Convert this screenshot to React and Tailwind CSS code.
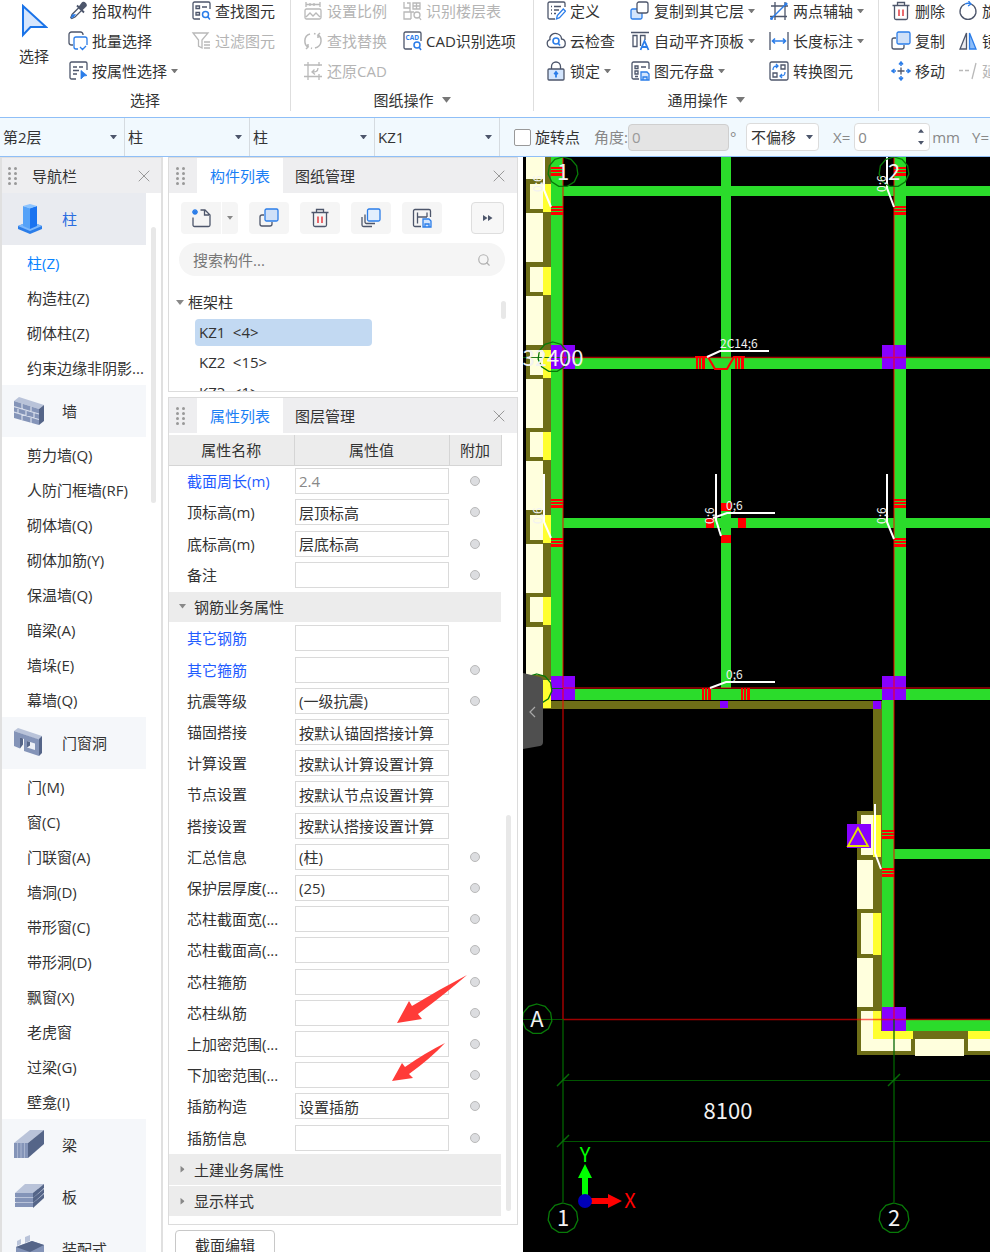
import { Fragment } from "react";
import clsx from "clsx";
import { Search, X } from "lucide-react";

const DARK = "#4d566b";
const BLUE = "#2b7de9";
const GREY = "#b9b9b9";

function Caret({ className, up }) {
  return (
    <svg viewBox="0 0 8 5" className={clsx("shrink-0", className)} aria-hidden="true">
      <path d={up ? "M0 5 4 0l4 5Z" : "M0 0h8L4 5Z"} fill="currentColor" />
    </svg>
  );
}

const icons = {
  picker: (
    <>
      <path d="M4 13.5 11 6.500l2.800 2.800L7 16l-3.200 1.500-1-1Z" fill="#fff" stroke={DARK} strokeWidth="1.300" />
      <path d="M2.500 17.500 4 13.500l4-.5-2 3Z" fill={BLUE} />
      <path d="m9 4.500 7 7M11.500 6l3-4c1-1.300 4.500 1.500 3.200 3L14 8.500Z" fill={DARK} stroke={DARK} strokeWidth="1.800" />
    </>
  ),
  batch: (
    <>
      <path d="M5 14H3.500A2.500 2.500 0 0 1 1 11.500v-8A2.500 2.500 0 0 1 3.500 1h9A2.500 2.500 0 0 1 15 3.500V4" stroke={DARK} />
      <path d="M10 18H8a2 2 0 0 1-2-2V8a2 2 0 0 1 2-2h9a2 2 0 0 1 2 2v6M12 16l2.500 2.500L18 15" stroke={BLUE} />
    </>
  ),
  byProp: (
    <>
      <path d="M8 18H3.500A1.500 1.500 0 0 1 2 16.500v-14A1.500 1.500 0 0 1 3.500 1h14A1.500 1.500 0 0 1 19 2.500V9M5 6h4M11 6h4M5 9.500h6M5 13h4" stroke={DARK} />
      <path d="m13 9.500 6 5-3 .5-3 3Z" fill={BLUE} stroke={BLUE} strokeWidth=".8" />
    </>
  ),
  findEl: (
    <>
      <path d="M9 18H3.500A1.500 1.500 0 0 1 2 16.500v-14A1.500 1.500 0 0 1 3.500 1h14A1.500 1.500 0 0 1 19 2.500V8M5 5h3.500v2.500H5ZM11 6h5M5 11.500h3.500V14H5Z" stroke={DARK} />
      <circle cx="14.500" cy="13.500" r="3" stroke={BLUE} strokeWidth="1.500" />
      <path d="m16.500 15.500 2.500 3" stroke={BLUE} strokeWidth="1.500" />
    </>
  ),
  filter: <path d="M2 2h15l-6 7v8l-3.500-2V9ZM13 11h6M13 14h6M13 17h6" stroke={GREY} />,
  scale: <path d="M3 1v5M17 1v5M3 3.500h14M7 2v3M11 2v3M2 9.500A1.500 1.500 0 0 1 3.500 8h13A1.500 1.500 0 0 1 18 9.500v7a1.500 1.500 0 0 1-1.500 1.500h-13A1.500 1.500 0 0 1 2 16.500ZM3 16l4-4 3 3 3-3 4 4" stroke={GREY} />,
  replace: <path d="M7 3C0 5 1 14 5 16l-2 2M5 16V13M12 17c8-2 7-11 3-13l2-2M15 4v3M8 17l1 .5M11 2.500 12.500 3" stroke={GREY} strokeWidth="1.500" />,
  restore: <path d="M5 1v18M1 4h18M1 15.500h18M16 1v4M16 13v6M15 7c0 4-3 4-6 4m2.500-2.500L9 11l3 2.500" stroke={GREY} />,
  floors: (
    <g stroke={GREY}>
      <path d="M2 1v6h6V2H5M8 7v4H2v7h7M8 11h4M11 2h7v6h-7ZM14.500 2v6M11 5h7M9 11v7" />
      <circle cx="15" cy="14" r="3" />
      <path d="m17 16 2 3" />
    </g>
  ),
  cad: (
    <>
      <path d="M10 18H3.500A1.500 1.500 0 0 1 2 16.500v-14A1.500 1.500 0 0 1 3.500 1h14A1.500 1.500 0 0 1 19 2.500V10" stroke={DARK} />
      <text x="3.500" y="9" fontSize="6.500" fontWeight="700" fill={BLUE} fontFamily="Open Sans">CAD</text>
      <circle cx="15" cy="14" r="3" stroke={BLUE} strokeWidth="1.500" />
      <path d="m17 16 2 3" stroke={BLUE} strokeWidth="1.500" />
    </>
  ),
  define: (
    <>
      <path d="M9 18H3.500A1.500 1.500 0 0 1 2 16.500v-14A1.500 1.500 0 0 1 3.500 1h14A1.500 1.500 0 0 1 19 2.500V6M5 5.500h1M8 5.500h7M5 9h1M8 9h5M5 12.500h1M8 12.500h2" stroke={DARK} />
      <path d="m10.500 18 .8-3.500 6-6.500 2.200 2.200-6 6.500Z" stroke={BLUE} />
    </>
  ),
  cloud: (
    <>
      <path d="M5 16.500a4 4 0 0 1-1-7.800C3 4 8 1 12 3c2 .8 3.500 3 3.500 5 5 .5 5 8.500 0 8.500Z" stroke={DARK} />
      <circle cx="10" cy="10" r="3" stroke={BLUE} strokeWidth="1.600" />
      <path d="m12 12 2 2.500" stroke={BLUE} strokeWidth="1.600" />
    </>
  ),
  lock: (
    <>
      <path d="M5.500 8V5.500a4.500 4.500 0 0 1 9 0V8" stroke={DARK} />
      <rect x="2" y="8" width="16" height="11" rx="1" fill="#d3e5fd" stroke={DARK} />
      <path d="M10 16.500V11.500M8.200 13.200 10 11l1.800 2.200" stroke={BLUE} strokeWidth="1.800" />
    </>
  ),
  copyFloor: (
    <>
      <rect x="1" y="8" width="11" height="10" rx="1.500" fill="#d3e5fd" stroke={BLUE} />
      <rect x="7" y="1" width="11" height="11" rx="2" fill="#fff" stroke={DARK} />
    </>
  ),
  align: (
    <>
      <path d="M1 1.500h18M3 4.500h4v11H3ZM10.500 15V4.500H15V9" stroke={DARK} />
      <path d="m10.500 19 4-9 4 9M12 16h5" stroke={BLUE} strokeWidth="1.800" />
    </>
  ),
  save: (
    <>
      <path d="M9 18H3.500A1.500 1.500 0 0 1 2 16.500v-14A1.500 1.500 0 0 1 3.500 1h14A1.500 1.500 0 0 1 19 2.500V8M5 5h3v2.500H5ZM11 6h5M5 10h3v3H5ZM5 15.500h3" stroke={DARK} />
      <path d="M11 11h6l2 2v6h-8ZM13 19v-3h4v3" stroke={BLUE} fill="#d3e5fd" />
    </>
  ),
  axis: (
    <>
      <path d="M6 1v18M16 1v18M2 5h17M1 15.500h17" stroke={DARK} />
      <path d="M2 18 18 2" stroke={BLUE} strokeWidth="1.500" />
      <circle cx="17" cy="3" r="1.500" fill={BLUE} />
      <circle cx="2.500" cy="17.500" r="1.500" fill={BLUE} />
    </>
  ),
  length: (
    <>
      <path d="M1 1v18M19 1v18" stroke={DARK} />
      <path d="M4 10h12M6 7.500 3.500 10 6 12.500M14 7.500l2.500 2.500-2.500 2.500" stroke={BLUE} strokeWidth="1.600" />
    </>
  ),
  convert: (
    <>
      <rect x="1" y="1" width="18" height="18" rx="1.500" stroke={DARK} />
      <path d="M12 4h4v4h-4ZM4 12h4v4H4Z" stroke={DARK} />
      <path d="M4 9c0-3 1-4 4.500-4M7 3l2 2-2 2M16 11c0 3-1 4-4.500 4M13 13l-2 2 2 2" stroke={BLUE} />
    </>
  ),
  trash: (
    <>
      <path d="M1.500 4.500h17M6.500 4V1.500h7V4M3.500 5v12A1.500 1.500 0 0 0 5 18.500h10a1.500 1.500 0 0 0 1.500-1.500V5" stroke={DARK} />
      <path d="M8 8.500v6.500M12 8.500v6.500" stroke="#e5484d" strokeWidth="1.600" />
    </>
  ),
  copy: (
    <>
      <path d="M5 7H3a2 2 0 0 0-2 2v7a2 2 0 0 0 2 2h8a2 2 0 0 0 2-2v-2" stroke={DARK} />
      <rect x="6" y="1" width="13" height="12" rx="1.500" fill="#cfe0f8" stroke={BLUE} />
    </>
  ),
  copies: (
    <>
      <path d="M4 6.500V14a1.500 1.500 0 0 0 1.500 1.500H14M1 9v8a1.500 1.500 0 0 0 1.500 1.500H11" stroke={DARK} />
      <rect x="6.500" y="1" width="12.500" height="12" rx="1.500" fill="#e3effd" stroke={BLUE} />
    </>
  ),
  move: (
    <>
      <path d="M10 6.500v7M6.500 10h7" stroke={DARK} />
      <path d="M10 5V2M10 15v3M5 10H2M15 10h3M8 3.500 10 1l2 2.500M8 16.500l2 2.500 2-2.500M3.500 8 1 10l2.500 2M16.500 8l2.500 2-2.500 2" stroke={BLUE} strokeWidth="1.500" />
    </>
  ),
  rotate: (
    <>
      <path d="M13 3a8 8 0 1 1-6 0" stroke={DARK} />
      <path d="M7 3c2-1 4-1 6 0M10.500 0 13 3l-3 2" stroke={BLUE} />
    </>
  ),
  mirror: (
    <>
      <path d="M8.500 2v16H2Z" fill="#ececf0" stroke={DARK} />
      <path d="M11.500 2v16H18Z" fill="#8dbdf8" stroke={BLUE} />
    </>
  ),
  extend: <path d="M1 9.500h4M7 9.500h4M18 2l-4 16" stroke={GREY} />,
  newFile: (
    <>
      <path d="M9.500 2H14l5 5v10a1.500 1.500 0 0 1-1.500 1.500h-14A1.500 1.500 0 0 1 2 17V9.500M13.500 2.500V7H18" stroke={DARK} />
      <path d="M4 1v6M1 4h6M2 2l4 4M6 2 2 6" stroke={BLUE} />
    </>
  ),
  saveLayout: (
    <>
      <path d="M9 18.500H3A1.500 1.500 0 0 1 1.500 17V3A1.500 1.500 0 0 1 3 1.500h14A1.500 1.500 0 0 1 18.500 3v6M5.500 4.500v11M5.500 9H15M15 4.500V9" stroke={DARK} />
      <path d="M11 11h6l2 2v6h-8ZM13 19v-3h4v3" stroke={BLUE} fill="#d3e5fd" />
    </>
  ),
};

function Icon({ name }) {
  return (
    <svg viewBox="0 0 20 20" className="size-5 shrink-0" fill="none" strokeWidth="1.300" aria-hidden="true">
      {icons[name]}
    </svg>
  );
}

function RibbonItem({ icon, label, caret, disabled }) {
  return (
    <button
      disabled={disabled}
      className={clsx("flex h-[22px] items-center gap-1 whitespace-nowrap", disabled ? "text-[#b4b4b4]" : "text-[#333]")}
    >
      <Icon name={icon} />
      {label}
      {caret && <Caret className="w-[7px] text-[#777]" />}
    </button>
  );
}

function RibbonColumn({ className, items }) {
  return (
    <div className={clsx("flex shrink-0 flex-col gap-2", className)}>
      {items.map((item) => (
        <RibbonItem key={item.label} {...item} />
      ))}
    </div>
  );
}

function RibbonGroup({ className, bodyClassName, label, caret, children }) {
  return (
    <section className={clsx("flex h-[111px] shrink-0 flex-col justify-between border-r border-[#dedede]", className)}>
      <div className={clsx("flex", bodyClassName)}>{children}</div>
      <div className="flex h-[22px] items-center justify-center gap-2">
        {label}
        {caret && <Caret className="w-[9px] text-[#777]" />}
      </div>
    </section>
  );
}

function Ribbon() {
  return (
    <header className="flex h-[117px] shrink-0 overflow-hidden">
      <RibbonGroup className="w-[291px]" label="选择">
        <button className="flex w-[68px] flex-col items-center gap-2 pt-1">
          <svg viewBox="0 0 28 34" className="h-[34px] w-7" aria-hidden="true">
            <path d="M3 2v29l7.500-8H26Z" fill="#d6e6fd" stroke="#1a73e8" strokeWidth="2" />
          </svg>
          选择
        </button>
        <RibbonColumn
          className="w-[123px]"
          items={[
            { icon: "picker", label: "拾取构件" },
            { icon: "batch", label: "批量选择" },
            { icon: "byProp", label: "按属性选择", caret: true },
          ]}
        />
        <RibbonColumn
          items={[
            { icon: "findEl", label: "查找图元" },
            { icon: "filter", label: "过滤图元", disabled: true },
          ]}
        />
      </RibbonGroup>
      <RibbonGroup className="w-[243px]" bodyClassName="pl-3" label="图纸操作" caret>
        <RibbonColumn
          className="w-[99px]"
          items={[
            { icon: "scale", label: "设置比例", disabled: true },
            { icon: "replace", label: "查找替换", disabled: true },
            { icon: "restore", label: "还原CAD", disabled: true },
          ]}
        />
        <RibbonColumn
          items={[
            { icon: "floors", label: "识别楼层表", disabled: true },
            { icon: "cad", label: "CAD识别选项" },
          ]}
        />
      </RibbonGroup>
      <RibbonGroup className="w-[345px]" bodyClassName="pl-3" label="通用操作" caret>
        <RibbonColumn
          className="w-[84px]"
          items={[
            { icon: "define", label: "定义" },
            { icon: "cloud", label: "云检查" },
            { icon: "lock", label: "锁定", caret: true },
          ]}
        />
        <RibbonColumn
          className="w-[139px]"
          items={[
            { icon: "copyFloor", label: "复制到其它层", caret: true },
            { icon: "align", label: "自动平齐顶板", caret: true },
            { icon: "save", label: "图元存盘", caret: true },
          ]}
        />
        <RibbonColumn
          items={[
            { icon: "axis", label: "两点辅轴", caret: true },
            { icon: "length", label: "长度标注", caret: true },
            { icon: "convert", label: "转换图元" },
          ]}
        />
      </RibbonGroup>
      <div className="flex pl-3">
        <RibbonColumn
          className="w-[67px]"
          items={[
            { icon: "trash", label: "删除" },
            { icon: "copy", label: "复制" },
            { icon: "move", label: "移动" },
          ]}
        />
        <RibbonColumn
          items={[
            { icon: "rotate", label: "旋转" },
            { icon: "mirror", label: "镜像" },
            { icon: "extend", label: "延伸", disabled: true },
          ]}
        />
      </div>
    </header>
  );
}

function ContextSelect({ label, value }) {
  return (
    <div className="relative h-full w-[125px] shrink-0 border-r border-[#d5dbe0]">
      <select aria-label={label} className="h-full w-full appearance-none bg-transparent pl-[3px] text-[#333]">
        <option>{value}</option>
      </select>
      <Caret className="pointer-events-none absolute top-[17px] right-[7px] w-[7px] text-[#4d566b]" />
    </div>
  );
}

function ContextBar() {
  return (
    <div className="flex h-10 shrink-0 items-center overflow-hidden border-y border-[#8fbff7] bg-[#f1f9fe] whitespace-nowrap text-[#888]">
      <ContextSelect label="楼层" value="第2层" />
      <ContextSelect label="构件大类" value="柱" />
      <ContextSelect label="构件类型" value="柱" />
      <ContextSelect label="构件" value="KZ1" />
      <label className="ml-3.5 flex shrink-0 items-center gap-1 text-[#333]">
        <input type="checkbox" className="size-[17px] appearance-none rounded-[2px] border border-[#999] bg-white" />
        旋转点
      </label>
      <label htmlFor="angle" className="ml-3.5 shrink-0">角度:</label>
      <input
        id="angle"
        disabled
        defaultValue="0"
        className="h-[27px] w-[101px] shrink-0 rounded border border-[#cfcfcf] bg-[#e4e4e4] pl-[3px] text-[#999]"
      />
      <span className="ml-px w-4 shrink-0">°</span>
      <div className="relative shrink-0">
        <select aria-label="偏移方式" className="h-7 w-[73px] appearance-none rounded border border-[#dcdcdc] bg-white pl-1 text-[#333]">
          <option>不偏移</option>
        </select>
        <Caret className="pointer-events-none absolute top-3 right-1.5 w-[7px] text-[#4d566b]" />
      </div>
      <label htmlFor="offset-x" className="ml-3.5 shrink-0">X=</label>
      <div className="relative ml-1 shrink-0">
        <input id="offset-x" defaultValue="0" className="h-7 w-[76px] rounded border border-[#dcdcdc] bg-white pl-[3px]" />
        <Caret up className="pointer-events-none absolute top-1.5 right-1.5 w-[6px] text-[#4d566b]" />
        <Caret className="pointer-events-none absolute right-1.5 bottom-1.5 w-[6px] text-[#4d566b]" />
      </div>
      <span className="ml-0.5 shrink-0">mm</span>
      <label htmlFor="offset-y" className="ml-3 shrink-0">Y=</label>
      <input id="offset-y" defaultValue="0" className="ml-1 h-7 w-[76px] shrink-0 rounded border border-[#dcdcdc] bg-white pl-[3px]" />
    </div>
  );
}

function Grip() {
  return (
    <span className="grid w-[9px] shrink-0 grid-cols-2 gap-x-[3px] gap-y-0.5">
      {Array.from({ length: 8 }, (_, i) => (
        <i key={i} className="size-[3px] rounded-full bg-[#999]" />
      ))}
    </span>
  );
}

function CloseButton() {
  return (
    <button aria-label="关闭" className="ml-auto text-[#999]">
      <X size={20} strokeWidth={1.2} />
    </button>
  );
}

const shapes = {
  column: (
    <>
      <path d="m4 23 12-5 12 5v3l-12 5-12-5Z" fill="#2b7de9" />
      <path d="m4 23 12-5 12 5-12 5Z" fill="#7db8fb" />
      <path d="M9 3v20l7 3V5Z" fill="#55a2f8" />
      <path d="M23 3v20l-7 3V5Z" fill="#1a73f0" />
      <path d="m9 3 7-2 7 2-7 2.500Z" fill="#8cc4ff" />
    </>
  ),
  wall: (
    <>
      <path d="m0 6 5-4 25 8-5 4Z" fill="#b9c3d9" />
      <path d="m25 14 5-4v16l-5 4Z" fill="#556588" />
      <path d="m0 6 25 8v16L0 23Z" fill="#8494b8" />
      <path d="m0 11.500 25 7.500M0 17l25 7.500M8 8.500V14M17 11.500V17M4 12.500V18M12 15v6M20 17.500V23M8 19.500V25M17 22v6" stroke="#d6dcea" strokeWidth="1.200" />
    </>
  ),
  door: (
    <>
      <path d="m0 4 4-3 24 8-3 4Z" fill="#b9c3d9" />
      <path d="m25 12 3-3v17l-3 3Z" fill="#556588" />
      <path d="m0 4 25 8.500V29l-15-5V12l-4-1.500v11L0 19Z" fill="#8494b8" />
      <path d="m13 14 8 2.500V23l-8-2.500Z" fill="#eef1f7" />
      <path d="M13 14v6.500l3-2V15ZM6 10.500l3 1v6l-3 4Z" fill="#556588" />
    </>
  ),
  beam: (
    <>
      <path d="M0 14 16 1h14L14 14Z" fill="#b9c3d9" />
      <path d="M14 14 30 1v14L14 29Z" fill="#556588" />
      <path d="M0 14h14v15H0Z" fill="#8494b8" />
      <path d="M3.500 14v15M7 14v15M10.500 14v15" stroke="#a9b5d0" />
    </>
  ),
  slab: (
    <>
      {[10, 5, 0].map((y) => (
        <g key={y} transform={`translate(0 ${y})`}>
          <path d="M1 12 11 3h19L19 12Z" fill="#b9c3d9" />
          <path d="M19 12 30 3v4L19 17Z" fill="#556588" />
          <path d="M1 12h18v4H1Z" fill="#8494b8" />
        </g>
      ))}
    </>
  ),
  precast: (
    <>
      <path d="m2 14 16-6 12 4v12l-14 6L2 24Z" fill="#8494b8" />
      <path d="m2 14 16-6 12 4-14 7Z" fill="#556588" />
      <path d="m3 8 4-2v5l-4 2ZM11 4l5-2v6l-5 2Z" fill="#b9c3d9" />
    </>
  ),
};

const navGroups = [
  { name: "柱", shape: "column", active: true, items: ["柱(Z)", "构造柱(Z)", "砌体柱(Z)", "约束边缘非阴影..."] },
  {
    name: "墙",
    shape: "wall",
    items: ["剪力墙(Q)", "人防门框墙(RF)", "砌体墙(Q)", "砌体加筋(Y)", "保温墙(Q)", "暗梁(A)", "墙垛(E)", "幕墙(Q)"],
  },
  {
    name: "门窗洞",
    shape: "door",
    items: ["门(M)", "窗(C)", "门联窗(A)", "墙洞(D)", "带形窗(C)", "带形洞(D)", "飘窗(X)", "老虎窗", "过梁(G)", "壁龛(I)"],
  },
  { name: "梁", shape: "beam", items: [] },
  { name: "板", shape: "slab", items: [] },
  { name: "装配式", shape: "precast", items: [] },
];

function Navigator() {
  return (
    <nav className="flex w-[163px] shrink-0 flex-col overflow-hidden border-x-2 border-t border-[#e0e0e0]">
      <div className="flex h-[35px] shrink-0 items-center bg-[#eeeef0] pr-[7px] pl-1.5">
        <Grip />
        <span className="ml-[15px]">导航栏</span>
        <CloseButton />
      </div>
      <div className="flex min-h-0 flex-1 gap-[5px]">
        <div className="w-36 shrink-0">
          {navGroups.map((group) => (
            <Fragment key={group.name}>
              <button
                className={clsx(
                  "flex h-[52px] w-full items-center gap-[18px] pl-3 text-left",
                  group.active ? "bg-[#e9ebf0] text-[#2b6de0]" : "bg-[#f5f7fa]"
                )}
              >
                <svg viewBox="0 0 30 32" className="h-8 w-[30px] shrink-0" fill="none" aria-hidden="true">
                  {shapes[group.shape]}
                </svg>
                {group.name}
              </button>
              {group.items.map((item) => (
                <button
                  key={item}
                  className={clsx(
                    "block h-[35px] w-full pl-[25px] text-left whitespace-nowrap",
                    item === "柱(Z)" && "text-[#0a84ff]"
                  )}
                >
                  {item}
                </button>
              ))}
            </Fragment>
          ))}
        </div>
        <div className="mt-[34px] h-[276px] w-[5px] rounded-full bg-[#e8e8e8]" />
      </div>
    </nav>
  );
}

function PanelTabs({ active, other }) {
  return (
    <div className="flex h-[35px] shrink-0 items-center bg-[#eeeef0] pr-2 pl-[7px]">
      <Grip />
      <button className="ml-3 h-full bg-white px-[13px] text-[#1a80f5]">{active}</button>
      <button className="h-full px-3">{other}</button>
      <CloseButton />
    </div>
  );
}

const toolButton = "flex h-8 w-10 items-center justify-center rounded bg-[#f5f5f5]";

function ComponentList() {
  return (
    <section className="flex h-[235px] shrink-0 flex-col overflow-hidden border border-[#dcdcdc]">
      <PanelTabs active="构件列表" other="图纸管理" />
      <div className="mt-[9px] flex shrink-0 gap-[11px] pr-[13px] pl-3">
        <div className="flex gap-px">
          <button aria-label="新建" className="flex h-8 w-10 items-center justify-center rounded-l bg-[#f5f5f5]">
            <Icon name="newFile" />
          </button>
          <button aria-label="新建选项" className="flex h-8 w-4 items-center justify-center rounded-r bg-[#f5f5f5]">
            <Caret className="w-[6px] text-[#888]" />
          </button>
        </div>
        <button aria-label="复制" className={toolButton}><Icon name="copy" /></button>
        <button aria-label="删除" className={toolButton}><Icon name="trash" /></button>
        <button aria-label="层间复制" className={toolButton}><Icon name="copies" /></button>
        <button aria-label="存档" className={toolButton}><Icon name="saveLayout" /></button>
        <button aria-label="更多" className="ml-auto flex h-8 w-[33px] items-center justify-center rounded border border-[#dedede] bg-[#f7f7f7]">
          <svg viewBox="0 0 10 6" className="w-2.5" aria-hidden="true">
            <path d="M0 0v6l4.500-3ZM5 0v6l4.500-3Z" fill={DARK} />
          </svg>
        </button>
      </div>
      <label className="mt-[9px] mr-3 ml-2.5 flex h-[33px] shrink-0 items-center rounded-full bg-[#f5f5f5] px-3.5">
        <input aria-label="搜索构件" placeholder="搜索构件..." className="min-w-0 flex-1 bg-transparent placeholder:text-[#777]" />
        <Search size={14} strokeWidth={2} className="text-[#b0b0b0]" />
      </label>
      <div className="mt-[11px] flex min-h-0 pr-[11px] pl-[7px]">
        <div className="flex-1">
          <button className="flex h-[30px] items-center gap-1">
            <Caret className="w-[8px] text-[#888]" />
            框架柱
          </button>
          {["KZ1\u2002<4>", "KZ2\u2002<15>", "KZ3\u2002<1>"].map((name, i) => (
            <div key={name} className="flex h-[30px] items-center pl-[19px]">
              <button
                className={clsx("h-[27px] w-[177px] rounded pl-1 text-left", i === 0 && "bg-[#c2d9f2]")}
              >
                {name}
              </button>
            </div>
          ))}
        </div>
        <div className="mt-3.5 h-[18px] w-[5px] rounded-full bg-[#e8e8e8]" />
      </div>
    </section>
  );
}

// link: label shown in blue, extra: row has the "附加" toggle
const properties = [
  { name: "截面周长(m)", value: "2.4", link: true, extra: true, readOnly: true },
  { name: "顶标高(m)", value: "层顶标高", extra: true },
  { name: "底标高(m)", value: "层底标高", extra: true },
  { name: "备注", value: "", extra: true },
  { section: "钢筋业务属性", open: true },
  { name: "其它钢筋", value: "", link: true },
  { name: "其它箍筋", value: "", link: true, extra: true },
  { name: "抗震等级", value: "(一级抗震)", extra: true },
  { name: "锚固搭接", value: "按默认锚固搭接计算" },
  { name: "计算设置", value: "按默认计算设置计算" },
  { name: "节点设置", value: "按默认节点设置计算" },
  { name: "搭接设置", value: "按默认搭接设置计算" },
  { name: "汇总信息", value: "(柱)", extra: true },
  { name: "保护层厚度(...", value: "(25)", extra: true },
  { name: "芯柱截面宽(...", value: "", extra: true },
  { name: "芯柱截面高(...", value: "", extra: true },
  { name: "芯柱箍筋", value: "", extra: true },
  { name: "芯柱纵筋", value: "", extra: true },
  { name: "上加密范围(...", value: "", extra: true },
  { name: "下加密范围(...", value: "", extra: true },
  { name: "插筋构造", value: "设置插筋", extra: true },
  { name: "插筋信息", value: "", extra: true },
  { section: "土建业务属性" },
  { section: "显示样式" },
];

function PropertyRow({ row, id }) {
  if (row.section) {
    return (
      <tr>
        <td colSpan={3} className="border-y border-white bg-[#ececec] p-0">
          <button className="flex h-[25px] w-full items-center gap-2 pl-2.5">
            <Caret className={clsx("w-[7px] text-[#888]", !row.open && "-rotate-90")} />
            {row.section}
          </button>
        </td>
      </tr>
    );
  }
  return (
    <tr>
      <td className="p-0 pl-[18px] whitespace-nowrap">
        <label htmlFor={id} className={clsx(row.link && "text-[#1f5cff]")}>{row.name}</label>
      </td>
      <td className="p-0 pl-px">
        <input
          id={id}
          defaultValue={row.value}
          readOnly={row.readOnly}
          className={clsx("block h-[26px] w-[154px] border border-[#dadada] bg-white pl-[3px]", row.readOnly && "text-[#888]")}
        />
      </td>
      <td className="p-0">
        {row.extra && (
          <input
            type="checkbox"
            aria-label={`${row.name} 附加`}
            className="mx-auto block size-2.5 appearance-none rounded-full border border-[#b9b9b9] bg-[#dcdde0]"
          />
        )}
      </td>
    </tr>
  );
}

function PropertyList() {
  return (
    <section className="relative flex shrink-0 flex-col border border-[#dcdcdc] pb-[7px]">
      <PanelTabs active="属性列表" other="图层管理" />
      <div className="mt-0.5 flex">
        <table className="h-[782px] w-[332px] table-fixed border-collapse">
          <colgroup>
            <col className="w-[125px]" />
            <col className="w-[155px]" />
            <col className="w-[52px]" />
          </colgroup>
          <thead>
            <tr className="h-[30px] bg-[#ececec]">
              <th className="border-r border-b border-[#d5d5d5] p-0 font-normal">属性名称</th>
              <th className="border-r border-b border-[#d5d5d5] p-0 font-normal">属性值</th>
              <th className="border-r border-b border-[#d5d5d5] p-0 font-normal">附加</th>
            </tr>
          </thead>
          <tbody>
            {properties.map((row, i) => (
              <PropertyRow key={row.name ?? row.section} row={row} id={`prop-${i}`} />
            ))}
          </tbody>
        </table>
        <div className="mb-1.5 ml-1 h-[396px] w-[5px] self-end rounded-full bg-[#e8e8e8]" />
      </div>
      <svg viewBox="0 0 80 112" className="pointer-events-none absolute top-[574px] left-[221px] h-28 w-20" fill="#ff3b38" aria-hidden="true">
        <path d="M77 3 Q50 17 22 34 L19 29 7 51 32 47 28 42 Q55 22 77 3Z" />
        <path d="M55 71 Q35 81 15 95 L12 91 2 109 23 106 19 102 Q40 87 55 71Z" />
      </svg>
    </section>
  );
}

const GREEN = "#2bdc2b";
const OLIVE = "#6e6e17";
const CREAM = "#ffffdd";
const YELLOW = "#ffff30";
const PURPLE = "#8800ff";

const box = (fill) => ([x, y, w, h]) => <rect key={`${x}-${y}`} x={x} y={y} width={w} height={h} fill={fill} />;

const beams = [
  [551, 157, 12, 531],
  [563, 186, 427, 10],
  [721, 157, 10, 531],
  [551, 358, 439, 11],
  [563, 518, 427, 10],
  [551, 689, 439, 11],
  [894, 157, 12, 531],
  [882, 700, 12, 320],
  [894, 849, 96, 10],
  [894, 1020, 96, 11],
];

const walls = [
  [526, 157, 25, 552],
  [551, 701, 330, 8],
  [873, 701, 9, 340],
  [857, 811, 25, 244],
  [857, 1031, 133, 24],
];

const leftTall = [[526, 157, 17, 22], [526, 213, 17, 49], [526, 296, 17, 49], [526, 379, 17, 49], [526, 461, 17, 49], [526, 544, 17, 49], [526, 627, 17, 48]];
const leftShort = [184, 267, 350, 432, 515, 597, 680];

const cream = [
  [861, 815, 12, 40],
  [857, 860, 16, 49],
  [861, 913, 12, 41],
  [857, 958, 16, 49],
  [861, 1011, 12, 40],
  [873, 1039, 38, 12],
  [915, 1039, 49, 17],
  [968, 1039, 22, 12],
];

const yellow = [
  [873, 815, 8, 42],
  [873, 913, 8, 42],
  [873, 1011, 8, 28],
  [873, 1031, 40, 8],
  [968, 1031, 22, 8],
];

const columns = [
  [551, 345, 24, 24],
  [882, 345, 24, 24],
  [551, 676, 24, 24],
  [882, 676, 24, 24],
  [882, 1007, 24, 24],
  [847, 824, 24, 24],
  [720, 701, 8, 7],
  [873, 701, 8, 8],
];

// stirrup groups; rows run across a vertical beam, bars across a horizontal one
const hatchRows = [[551, 167], [551, 206], [551, 499], [551, 538], [894, 167], [894, 206], [894, 499], [894, 538], [882, 830], [882, 868]];
const hatchBars = [[696, 357], [735, 357], [702, 688], [741, 688]];

const leaders = [
  "544,157 544,190 551,207",
  "887,157 887,188 894,207",
  "544,474 544,522 551,538",
  "716,474 716,520 721,536",
  "713,518 727,513 775,513",
  "887,474 887,522 894,539",
  "707,357 720,351 769,351",
  "710,688 726,682 775,682",
  "875,804 875,853 881,869",
];

function AxisBubble({ x, y, r = 15 }) {
  const points = Array.from({ length: 11 }, (_, i) => {
    const a = (i * 2 * Math.PI) / 11 - Math.PI / 2;
    return `${x + r * Math.cos(a)},${y + r * Math.sin(a)}`;
  });
  return <polygon points={points.join(" ")} fill="none" stroke="#087a08" strokeWidth="1.300" />;
}

function Drawing() {
  return (
    <svg className="h-full w-full" aria-label="平面图">
      <g transform="translate(-523 -157)" fontFamily="Noto Sans CJK SC, sans-serif">
        {walls.map(box(OLIVE))}
        {leftTall.map(box(CREAM))}
        {leftShort.map((y) => (
          <Fragment key={y}>
            <rect x="530" y={y} width="13" height="25" fill={CREAM} />
            <rect x="543" y={y} width="8" height="28" fill={YELLOW} />
          </Fragment>
        ))}
        {cream.map(box(CREAM))}
        {yellow.map(box(YELLOW))}
        {beams.map(box(GREEN))}
        {columns.map(box(PURPLE))}

        <g stroke="#ff0000" strokeOpacity=".62" strokeWidth="1.500">
          <path d="M563 157V1019M894 157V1019M563 1019.500H990M563 688H990M563 357.500H990" />
        </g>
        <g stroke="#006400" strokeOpacity=".85" fill="none">
          <path d="M563 1019V1202M894 1019V1202" strokeWidth="1.500" />
          <path d="M563 1080.500H990M563 1141.500H990M523 357.500H563M523 1019.500H563M551 688.500H563" />
          <path d="m557 1086 12-12M557 1147l12-12M888 1086l12-12" stroke="#087a08" strokeWidth="1.500" />
        </g>

        <g fill="#ff0000">
          {hatchRows.map(([x, y]) => (
            <path key={`${x}-${y}`} d={`M${x} ${y}h12v2h-12ZM${x} ${y + 3}h12v2h-12ZM${x} ${y + 6}h12v3h-12Z`} />
          ))}
          {hatchBars.map(([x, y]) => (
            <path key={x} d={`M${x} ${y}v12h2v-12ZM${x + 3} ${y}v12h2v-12ZM${x + 6} ${y}v12h3v-12Z`} />
          ))}
          {[[706, 518, 8, 10], [738, 518, 8, 10], [721, 503, 10, 8], [721, 535, 10, 8]].map(box("#ff0000"))}
        </g>
        <path d="M695 357h13l7 12h12l7-12h11" fill="none" stroke="#ff0000" strokeWidth="2" />

        <g fill="none" stroke="#fff" strokeWidth="2">
          {leaders.map((points) => (
            <polyline key={points} points={points} />
          ))}
        </g>
        <path d="m858 828-10 18h20Z" fill="none" stroke="#e6e600" strokeWidth="1.800" />

        <AxisBubble x={563} y={172} />
        <AxisBubble x={894} y={172} />
        <AxisBubble x={553} y={357} />
        <AxisBubble x={537} y={689} />
        <AxisBubble x={537} y={1019} />
        <AxisBubble x={563} y={1218} />
        <AxisBubble x={894} y={1218} />

        <g fill="#f2f2f2" fontSize="12">
          <text x="720" y="348">2C14;6</text>
          <text x="726" y="510">0;6</text>
          <text x="726" y="679">0;6</text>
          <text transform="translate(714 524) rotate(-90)">0;6</text>
          <text transform="translate(886 524) rotate(-90)">0;6</text>
          <text transform="translate(886 192) rotate(-90)">0;6</text>
          <text transform="translate(542 192) rotate(-90)">0;6</text>
          <text transform="translate(542 524) rotate(-90)">0;6</text>
        </g>
        <g fill="#f2f2f2" fontSize="22" textAnchor="middle">
          <text x="563" y="180">1</text>
          <text x="894" y="180">2</text>
          <text x="553" y="366">32400</text>
          <text x="537" y="1027">A</text>
          <text x="563" y="1226">1</text>
          <text x="894" y="1226">2</text>
          <text x="728" y="1119">8100</text>
        </g>

        <path d="M582 1198v-20h-4l7-14 7 14h-4v20Z" fill="#00ff00" />
        <path d="M590 1198h18v-4l14 7-14 7v-4h-18Z" fill="#ff0000" />
        <circle cx="585" cy="1201" r="7" fill="#0000b8" />
        <g fontSize="20" textAnchor="middle">
          <text x="585" y="1162" fill="#00ff00">Y</text>
          <text x="630" y="1208" fill="#ff0000">X</text>
        </g>
      </g>
    </svg>
  );
}

export default function App() {
  return (
    <div className="flex h-screen flex-col overflow-hidden bg-white font-['Open_Sans','Noto_Sans_CJK_SC',sans-serif] text-[15px] leading-5 text-[#333]">
      <Ribbon />
      <ContextBar />
      <main className="flex min-h-0 flex-1 gap-[5px]">
        <Navigator />
        <div className="flex w-[350px] shrink-0 flex-col gap-[5px] overflow-hidden">
          <ComponentList />
          <PropertyList />
          <button className="ml-[7px] h-[30px] w-[100px] shrink-0 rounded border border-[#c8c8c8] bg-white">截面编辑</button>
        </div>
        <div className="relative min-w-0 flex-1 overflow-hidden bg-black">
          <Drawing />
          <button aria-label="收起面板" className="absolute top-[516px] left-0 h-[76px] w-5">
            <svg viewBox="0 0 20 76" className="h-full w-full" fill="none" aria-hidden="true">
              <path d="M0 0l17 4q3 1 3 4v61q0 3-3 4L0 76Z" fill="#4f4f4f" />
              <path d="m12 34-5 5 5 5" stroke="#aaa" strokeWidth="1.200" />
            </svg>
          </button>
        </div>
      </main>
    </div>
  );
}
